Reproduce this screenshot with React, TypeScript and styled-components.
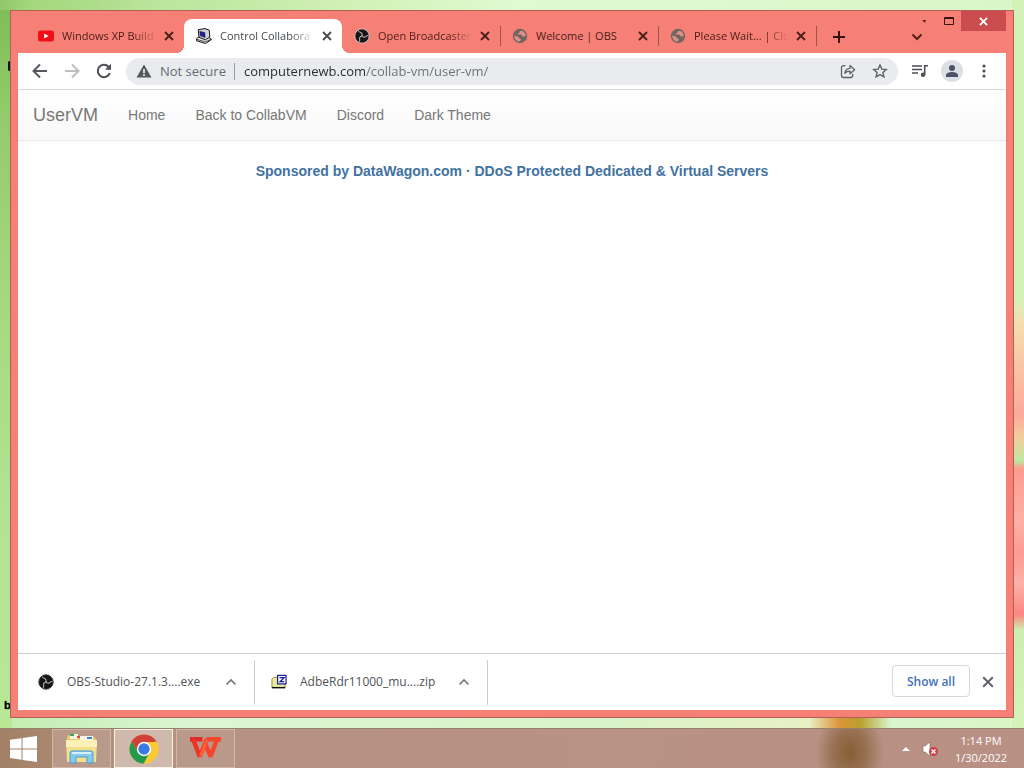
import React from "react";
import styled, { createGlobalStyle, css } from "styled-components";

const ui = `"Open Sans", "Noto Sans", sans-serif`;
const coral = "#f67f76";

const GlobalStyle = createGlobalStyle`
  *, *::before, *::after { box-sizing: border-box; }
  body { margin: 0; font-family: ${ui}; overflow: hidden; }
  button, input { font: inherit; color: inherit; border: 0; background: none; padding: 0; margin: 0; }
  a { text-decoration: none; }
  svg { display: block; flex: none; }
`;

const Desktop = styled.div`
  position: relative;
  display: flex;
  flex-direction: column;
  min-height: 100vh;
  background:
    linear-gradient(180deg, #d3f2b8 0 39%, #f6deb0 42%, #fbbfa2 49%, #fba99b 54%, #f3cd9f 57%, #bde8a0 60%, #fd9c90 61%, #feb0a6 68%, #fd9b93 72%, #fcb1a8 76%, #fb8680 80%, #cdeeb0 82%, #daf4bf 100%) right top / 12px 100% no-repeat,
    linear-gradient(90deg, #8fc968 0, #a5d87e 3%, transparent 14%) left top / 100% 10px no-repeat,
    linear-gradient(180deg, #7fbb58 0, #93ca6a 14%, #a5d981 40%, #b4e493 70%, #b9e895 100%) left top / 12px 100% no-repeat,
    linear-gradient(90deg, #c2edb0 0, #dcf6d5 20%, #d9f3c8 60%, #e8f0c4 79%, #dd9438 82%, #b8a02c 84%, #d9f6cf 87%, #dcf5c4 100%) left bottom / 100% 60px no-repeat,
    linear-gradient(90deg, #a9da86 0, #d0f1b6 34%, #e0fad0 50%, #d9f6c8 100%);
`;

const IconLabel = styled.span`
  position: absolute;
  left: 4px;
  bottom: 55px;
  width: 6px;
  overflow: hidden;
  font-size: 11px;
  font-weight: 600;
  line-height: 16px;
  color: #000;
  text-shadow: 0 0 1px #000;
`;

const IconEdge = styled.span`
  position: absolute;
  left: 8px;
  top: 61px;
  width: 3px;
  height: 10px;
  border-radius: 2px;
  background: #111;
`;

const Window = styled.section`
  position: relative;
  flex: 1;
  display: flex;
  flex-direction: column;
  margin: 10px;
  padding: 0 7px 7px;
  border: 1px solid #b05f52;
  background: ${coral};
`;

const TitleBar = styled.header`
  display: flex;
  align-items: flex-end;
  height: 42px;
  padding-left: 8px;
`;

const TabStrip = styled.div`
  display: flex;
  flex: 0 1 790px;
  min-width: 0;
  height: 34px;
`;

const Tab = styled.div<{ $active?: boolean; $divider?: boolean }>`
  position: relative;
  flex: 1 1 0;
  min-width: 0;
  display: flex;
  align-items: center;
  padding: 0 8px 0 12px;
  color: #4a1e18;
  ${(p) => p.$divider && css`
    &::after {
      content: "";
      position: absolute;
      right: -1px;
      top: 7px;
      width: 1px;
      height: 20px;
      background: #a3504a;
    }
  `}
  ${(p) => p.$active && css`
    background: #fff;
    color: #45494d;
    border-radius: 8px 8px 0 0;
    &::before, &::after {
      content: "";
      position: absolute;
      bottom: 0;
      width: 8px;
      height: 8px;
    }
    &::before {
      left: -8px;
      background: radial-gradient(circle at 0 0, transparent 8px, #fff 8px);
    }
    &::after {
      right: -8px;
      background: radial-gradient(circle at 100% 0, transparent 8px, #fff 8px);
    }
  `}
`;

const TabTitle = styled.button<{ $fade?: boolean }>`
  flex: 1;
  min-width: 0;
  margin: 0 5px 0 8px;
  overflow: hidden;
  white-space: nowrap;
  text-align: left;
  font-size: 11px;
  line-height: 18px;
  ${(p) => p.$fade && css`
    mask-image: linear-gradient(90deg, #000 calc(100% - 24px), transparent);
  `}
`;

const IconButton = styled.button<{ $size?: number; $w?: number }>`
  display: flex;
  align-items: center;
  justify-content: center;
  flex: none;
  width: ${(p) => p.$w ?? p.$size ?? 32}px;
  height: ${(p) => p.$size ?? 32}px;
`;

const NewTab = styled(IconButton)`
  margin-left: 7px;
`;

const TitleSide = styled.div`
  margin-left: auto;
  align-self: stretch;
  display: flex;
  flex-direction: column;
  align-items: flex-start;
`;

const Controls = styled.div`
  display: flex;
`;

const CloseWindow = styled(IconButton)`
  background: #ca4c4f;
`;

const Toolbar = styled.div`
  display: flex;
  align-items: center;
  height: 37px;
  padding: 0 6px;
  background: #fff;
  border-bottom: 1px solid #d9d9dc;
  color: #4c4f54;
`;

const Omnibox = styled.form`
  flex: 1;
  min-width: 0;
  display: flex;
  align-items: center;
  height: 27px;
  margin: 0 6px;
  padding: 0 2px 0 10px;
  border-radius: 14px;
  background: #e9ebee;
  font-size: 13px;
`;

const Security = styled.button`
  display: flex;
  align-items: center;
  gap: 8px;
  padding-right: 8px;
  border-right: 1px solid #9a9da1;
  line-height: 17px;
  color: #676b70;
`;

const Address = styled.input`
  flex: 1;
  min-width: 0;
  margin-left: 9px;
  outline: 0;
  color: transparent;
  background: linear-gradient(90deg, #27292c 122px, #6a6e73 122px);
  background-clip: text;
`;

const Avatar = styled.button`
  display: flex;
  align-items: center;
  justify-content: center;
  width: 22px;
  height: 22px;
  margin: 0 5px;
  border-radius: 50%;
  background: #dcdfe6;
`;

const Page = styled.main`
  flex: 1;
  background: #fff;
  font-family: "Liberation Sans", Arial, sans-serif;
`;

const SiteNav = styled.nav`
  display: flex;
  align-items: center;
  height: 51px;
  padding-left: 15px;
  background: linear-gradient(180deg, #fff, #f8f8f8);
  border-bottom: 1px solid #ececec;
  box-shadow: 0 1px 3px rgba(0, 0, 0, 0.05);
`;

const Brand = styled.a`
  margin-right: 15px;
  font-size: 18px;
  line-height: 20px;
  color: #777;
`;

const NavLink = styled.a`
  padding: 15px;
  font-size: 14px;
  line-height: 20px;
  color: #777;
`;

const Sponsor = styled.p`
  margin: 20px 0 0;
  text-align: center;
  font-size: 14px;
  line-height: 20px;
  font-weight: 700;
  a { color: #41729f; }
`;

const Downloads = styled.footer`
  display: flex;
  align-items: center;
  height: 57px;
  padding-right: 8px;
  background: #fff;
  border-top: 1px solid #cfcfd2;
`;

const Download = styled.div<{ $wide?: boolean }>`
  display: flex;
  align-items: center;
  flex: none;
  width: ${(p) => (p.$wide ? 237 : 233)}px;
  height: 45px;
  padding: 0 13px 0 ${(p) => (p.$wide ? 20 : 16)}px;
  border-right: 1px solid #cdcdd0;
`;

const FileName = styled.button`
  flex: 1;
  margin-left: 13px;
  text-align: left;
  white-space: nowrap;
  font-size: 12px;
  line-height: 18px;
  color: #505357;
`;

const ShowAll = styled.button`
  width: 78px;
  height: 32px;
  margin: 0 8px 2px auto;
  border: 1px solid #d6d8dc;
  border-radius: 4px;
  font-size: 12px;
  font-weight: 600;
  color: #3f72bd;
`;

const Taskbar = styled.footer`
  display: flex;
  align-items: center;
  height: 40px;
  border-top: 1px solid #94826f;
  background:
    radial-gradient(ellipse 34px 44px at 83% 60%, rgba(125, 85, 40, 0.85), rgba(130, 92, 50, 0.6) 50%, transparent),
    linear-gradient(90deg, #a08066 0, #b39078 10%, #b69284 24%, #b89284 60%, #b89084 100%);
  color: #fff;
`;

const Start = styled.button`
  display: flex;
  align-items: center;
  width: 52px;
  height: 39px;
  padding-left: 10px;
`;

const TaskButton = styled.button<{ $active?: boolean }>`
  display: flex;
  align-items: center;
  justify-content: center;
  width: 59px;
  height: 39px;
  margin-right: 3px;
  border: 1px solid ${(p) => (p.$active ? "#fbf3ea" : "#d0b7a8")};
  background: ${(p) => (p.$active ? "#cfb8ac" : "#b9998a")};
`;

const Tray = styled.div`
  display: flex;
  align-items: center;
  margin-left: auto;
  padding-right: 12px;
`;

const Clock = styled.time`
  width: 62px;
  margin-left: 6px;
  text-align: center;
  white-space: nowrap;
  font-size: 11px;
  line-height: 17px;
`;

const Cross = ({ size = 10, width = 2, color = "currentColor" }) => (
  <svg width={size} height={size} viewBox="0 0 10 10" stroke={color} strokeWidth={width}>
    <path d="M1 1l8 8M9 1L1 9" />
  </svg>
);

const Chevron = ({ up = false, color = "#777" }) => (
  <svg width="12" height="8" viewBox="0 0 12 8" fill="none" stroke={color} strokeWidth={up ? 1.7 : 2}>
    <path d={up ? "M1.500 6.500L6 2l4.500 4.500" : "M1.500 1.500L6 6l4.500-4.500"} />
  </svg>
);

const YouTube = () => (
  <svg width="16" height="16" viewBox="0 0 16 16">
    <rect y="2.500" width="16" height="11" rx="2.500" fill="#f00f14" />
    <path d="M6.200 5.500v5l4.400-2.500z" fill="#fff" />
  </svg>
);

const Computer = () => (
  <svg width="16" height="16" viewBox="0 0 16 16" stroke="#15151c" strokeLinejoin="round">
    <path d="M.6 10.500L4 8l8 .5 3.500 3-6 4L.6 12.800z" fill="#e4e4e8" />
    <path d="M2.200 1.700L9 .6l4.300 1.600.5 6.800L9.500 11.800 3 9.300z" fill="#d3d3da" />
    <path d="M3.800 3.500l5 1.100.3 4.800L4.300 7.800z" fill="#1c23a8" strokeWidth=".6" />
    <path d="M1 11.500l8.500 2.300 5.800-2.500" strokeWidth=".7" fill="none" />
  </svg>
);

const Obs = ({ ring = false }) => (
  <svg width="16" height="16" viewBox="0 0 16 16">
    <circle cx="8" cy="8" r="7.200" fill="#161416" stroke={ring ? "#d3b9b6" : "#3b3a3c"} strokeWidth="1" />
    <g fill="none" stroke="#b5b1b2" strokeWidth="1.100" strokeLinecap="round">
      {[0, 120, 240].map((a) => (
        <path key={a} transform={`rotate(${a} 8 8)`} d="M8 8C8.600 6.300 8 4.800 6.200 4.200C5.200 3.900 4.700 3.600 4.600 3" />
      ))}
    </g>
  </svg>
);

const Globe = () => (
  <svg width="16" height="16" viewBox="0 0 16 16">
    <circle cx="8" cy="8" r="7.200" fill="#71665f" />
    <path d="M9.800 2.800C8.300 3 7.500 3.500 7.500 4.300c0 .7-.5.900-1.300 1-.8.200-.9 1 0 1.200 1.800.2 3.600-.3 4.200 1.300.3 1 1.200 1.100 2.100.4l1.300-.3C13.800 5.500 12.300 3.500 9.800 2.800zM2.300 7.600C2.200 10.800 4.300 13.400 7.700 13.700c-.1-.9.300-1.200 1-1.500.6-.4.400-1-.4-1.200-1-.2-1.300-.5-1.500-1.300C6.400 8.300 4.500 8.600 2.300 7.600z" fill="#dd9188" />
  </svg>
);

const Windows = () => (
  <svg width="28" height="26" viewBox="0 0 28 26" fill="#fff">
    <path d="M0 3.800l11.500-1.600v10.200H0zM12.500 2L27 0v12.400H12.500zM0 13.500h11.500v10.200L0 22.100zM12.500 13.500H27V26l-14.500-2.100z" />
  </svg>
);

const Explorer = () => (
  <svg width="34" height="32" viewBox="0 0 34 32">
    <path d="M2 4l1-2h9l2 2h16l1 3v21H2z" fill="#e7c968" />
    <rect x="5" y="1" width="8" height="5" fill="#f8f4df" />
    <path d="M5 2h4" stroke="#3ba55c" strokeWidth="2" />
    <rect x="15" y="3" width="13" height="5" fill="#fbf7e8" />
    <path d="M12 4h3" stroke="#d64c35" strokeWidth="2" />
    <path d="M22 5h5" stroke="#3f82c5" strokeWidth="2" />
    <path d="M1 7h31l-1 22H2z" fill="#f3e08c" />
    <path d="M1 7h31v7H1z" fill="#faf0b8" />
    <path d="M5 30V20q0-2 2-2h19q2 0 2 2v10h-6v-6H11v6z" fill="#86c9ec" stroke="#4a9fcd" />
    <path d="M7 20h19" stroke="#d5f2fc" strokeWidth="2" />
  </svg>
);

const Chrome = () => (
  <svg width="30" height="30" viewBox="0 0 30 30">
    <circle cx="15" cy="15" r="14.500" fill="#fbc934" />
    <path d="M2.440 7.750A14.500 14.500 0 0 1 27.560 7.750L15 8.500 9.370 18.250z" fill="#cf4237" />
    <path d="M2.440 7.750A14.500 14.500 0 0 0 15 29.500L20.630 18.250H9.370z" fill="#249a4c" />
    <path d="M27.560 7.750A14.500 14.500 0 0 1 15 29.500L20.630 18.250 15 8.500z" fill="#fbc934" />
    <circle cx="15" cy="15" r="7.200" fill="#fff" />
    <circle cx="15" cy="15" r="5.700" fill="#3b7ae5" />
  </svg>
);

const Wps = () => (
  <svg width="31" height="23" viewBox="0 0 31 23" fill="none" strokeWidth="4.500">
    <path d="M16.500 2.300H27L20.500 19.500 14.800 5.500" stroke="#f5452c" strokeLinejoin="bevel" />
    <path d="M0 2.300H12.500" stroke="#e02a22" />
    <path d="M3 2L9.800 19.500 17 2" stroke="#ee3324" strokeLinejoin="bevel" />
    <path d="M10.500 19.500L17 2.500" stroke="#ff5f38" strokeWidth="3.500" />
    <path d="M24 2.300h7" stroke="#f5452c" />
  </svg>
);

const tabs = [
  { title: "Windows XP Build", icon: <YouTube />, fade: true },
  { title: "Control Collabora", icon: <Computer />, active: true, fade: true },
  { title: "Open Broadcaster", icon: <Obs ring />, divider: true, fade: true },
  { title: "Welcome | OBS", icon: <Globe />, divider: true },
  { title: "Please Wait... | Clo", icon: <Globe />, divider: true, fade: true },
];

export default function App() {
  return (
    <>
      <GlobalStyle />
      <Desktop>
        <IconEdge />
        <IconLabel>b</IconLabel>
        <Window>
          <TitleBar>
            <TabStrip role="tablist">
              {tabs.map((t) => (
                <Tab key={t.title} $active={t.active} $divider={t.divider}>
                  {t.icon}
                  <TabTitle role="tab" aria-selected={!!t.active} $fade={t.fade}>{t.title}</TabTitle>
                  <IconButton $size={14} aria-label={`Close ${t.title}`}><Cross size={10} width={1.8} /></IconButton>
                </Tab>
              ))}
            </TabStrip>
            <NewTab aria-label="New tab" $size={32}>
              <svg width="12" height="12" viewBox="0 0 12 12" stroke="#35120e" strokeWidth="2"><path d="M6 0v12M0 6h12" /></svg>
            </NewTab>
            <TitleSide>
              <Controls>
                <IconButton $w={26} $size={20} aria-label="Minimize">
                  <svg width="4" height="3" viewBox="0 0 4 3"><path d="M0 0h4l-1 3z" fill="#6d1f18" /></svg>
                </IconButton>
                <IconButton $w={24} $size={20} aria-label="Maximize">
                  <svg width="10" height="8" viewBox="0 0 10 8" fill="none" stroke="#35120e"><path d="M.5.5h9v7h-9zM0 1.500h10" /></svg>
                </IconButton>
                <CloseWindow $w={45} $size={20} aria-label="Close window"><Cross size={9} width={2} color="#fff" /></CloseWindow>
              </Controls>
              <IconButton $w={12} $size={12} aria-label="Search tabs"><Chevron color="#5a1d18" /></IconButton>
            </TitleSide>
          </TitleBar>

          <Toolbar>
            <IconButton aria-label="Back">
              <svg width="16" height="16" viewBox="0 0 16 16" fill="none" stroke="#55585d" strokeWidth="2"><path d="M15 8H2M8 1.500L1.500 8 8 14.500" /></svg>
            </IconButton>
            <IconButton aria-label="Forward">
              <svg width="16" height="16" viewBox="0 0 16 16" fill="none" stroke="#bcbec1" strokeWidth="2"><path d="M1 8h13M8 1.500L14.500 8 8 14.500" /></svg>
            </IconButton>
            <IconButton aria-label="Reload">
              <svg width="16" height="16" viewBox="0 0 16 16" fill="none" stroke="#4c4f54" strokeWidth="2"><path d="M13.800 10.200A6.200 6.200 0 1 1 12.500 3.700L14 5.500" /><path d="M15 .8v6H9z" fill="#4c4f54" stroke="none" /></svg>
            </IconButton>
            <Omnibox onSubmit={(e) => e.preventDefault()}>
              <Security type="button">
                <svg width="16" height="14" viewBox="0 0 16 14"><path d="M8 .5L15.500 13.500H.5z" fill="#55585d" /><path d="M8 5v4.200M8 10.300V12" stroke="#fff" strokeWidth="1.500" /></svg>
                Not secure
              </Security>
              <Address aria-label="Address" defaultValue="computernewb.com/collab-vm/user-vm/" spellCheck={false} />
              <IconButton type="button" aria-label="Share">
                <svg width="16" height="16" viewBox="0 0 16 16" fill="none" stroke="#5f6368" strokeWidth="1.300"><path d="M5.500 2.700H3.500a2 2 0 0 0-2 2v7.800a2 2 0 0 0 2 2h7.200a2 2 0 0 0 2-2V11" /><path d="M4.800 10.200c.4-3 2.200-4.700 5.200-4.900V2.500l4.600 4.200-4.600 4.100V8.200c-2.200 0-3.800.5-5.200 2z" strokeLinejoin="round" /></svg>
              </IconButton>
              <IconButton type="button" aria-label="Bookmark">
                <svg width="16" height="16" viewBox="0 0 16 16" fill="none" stroke="#5f6368" strokeWidth="1.400"><path d="M8 2l1.800 4.100 4.500.4-3.400 3 1 4.400L8 11.600l-3.900 2.300 1-4.400-3.400-3 4.500-.4z" /></svg>
              </IconButton>
            </Omnibox>
            <IconButton aria-label="Media controls">
              <svg width="16" height="14" viewBox="0 0 16 14" fill="none" stroke="#4c4f54" strokeWidth="1.600"><path d="M0 2h10M0 5.500h10M0 9h6M12.700 11V1.800H16" /><circle cx="11" cy="10.800" r="2.200" fill="#4c4f54" stroke="none" /></svg>
            </IconButton>
            <Avatar aria-label="Profile">
              <svg width="12" height="12" viewBox="0 0 12 12" fill="#4c5263"><circle cx="6" cy="3" r="3" /><path d="M0 12v-2c0-2 3.500-3 6-3s6 1 6 3v2z" /></svg>
            </Avatar>
            <IconButton aria-label="Menu">
              <svg width="4" height="14" viewBox="0 0 4 14" fill="#4c4f54"><circle cx="2" cy="2" r="1.600" /><circle cx="2" cy="7" r="1.600" /><circle cx="2" cy="12" r="1.600" /></svg>
            </IconButton>
          </Toolbar>

          <Page>
            <SiteNav>
              <Brand href="#uservm">UserVM</Brand>
              <NavLink href="#home">Home</NavLink>
              <NavLink href="#collabvm">Back to CollabVM</NavLink>
              <NavLink href="#discord">Discord</NavLink>
              <NavLink href="#theme">Dark Theme</NavLink>
            </SiteNav>
            <Sponsor><a href="#sponsor">Sponsored by DataWagon.com · DDoS Protected Dedicated &amp; Virtual Servers</a></Sponsor>
          </Page>

          <Downloads>
            <Download $wide>
              <Obs />
              <FileName>OBS-Studio-27.1.3....exe</FileName>
              <IconButton $size={20} aria-label="Options for OBS-Studio"><Chevron up /></IconButton>
            </Download>
            <Download>
              <svg width="16" height="16" viewBox="0 0 17 16">
                <path d="M1 5l2-2h4l1 2h7v9H1z" fill="#e8ea9c" stroke="#8a8a40" />
                <path d="M1 14h14" stroke="#111" strokeWidth="1.500" />
                <rect x="7" y="1" width="9" height="9" fill="#fff" stroke="#1c1a9c" strokeWidth="1.300" />
                <path d="M9 3.300h5L9.500 7.700H14" fill="none" stroke="#1c1a9c" strokeWidth="1.300" />
              </svg>
              <FileName>AdbeRdr11000_mu....zip</FileName>
              <IconButton $size={20} aria-label="Options for AdbeRdr11000"><Chevron up /></IconButton>
            </Download>
            <ShowAll>Show all</ShowAll>
            <IconButton $size={20} aria-label="Close downloads"><Cross size={12} width={1.6} color="#5f6368" /></IconButton>
          </Downloads>
        </Window>

        <Taskbar>
          <Start aria-label="Start"><Windows /></Start>
          <TaskButton aria-label="File Explorer"><Explorer /></TaskButton>
          <TaskButton $active aria-label="Chrome"><Chrome /></TaskButton>
          <TaskButton aria-label="WPS Office"><Wps /></TaskButton>
          <Tray>
            <IconButton $size={20} aria-label="Show hidden icons">
              <svg width="8" height="4" viewBox="0 0 8 4"><path d="M0 4l4-4 4 4z" fill="#fff" /></svg>
            </IconButton>
            <IconButton $w={28} $size={20} aria-label="Volume muted">
              <svg width="16" height="16" viewBox="0 0 16 16"><path d="M1 5h2l5-4v14l-5-4H1z" fill="#fff" stroke="#6b5a50" strokeWidth=".5" /><circle cx="11.500" cy="10.500" r="4.500" fill="#cf3f45" /><path d="M9.500 8.500l4 4M13.500 8.500l-4 4" stroke="#fff" strokeWidth="1.400" /></svg>
            </IconButton>
            <Clock>1:14 PM<br />1/30/2022</Clock>
          </Tray>
        </Taskbar>
      </Desktop>
    </>
  );
}
